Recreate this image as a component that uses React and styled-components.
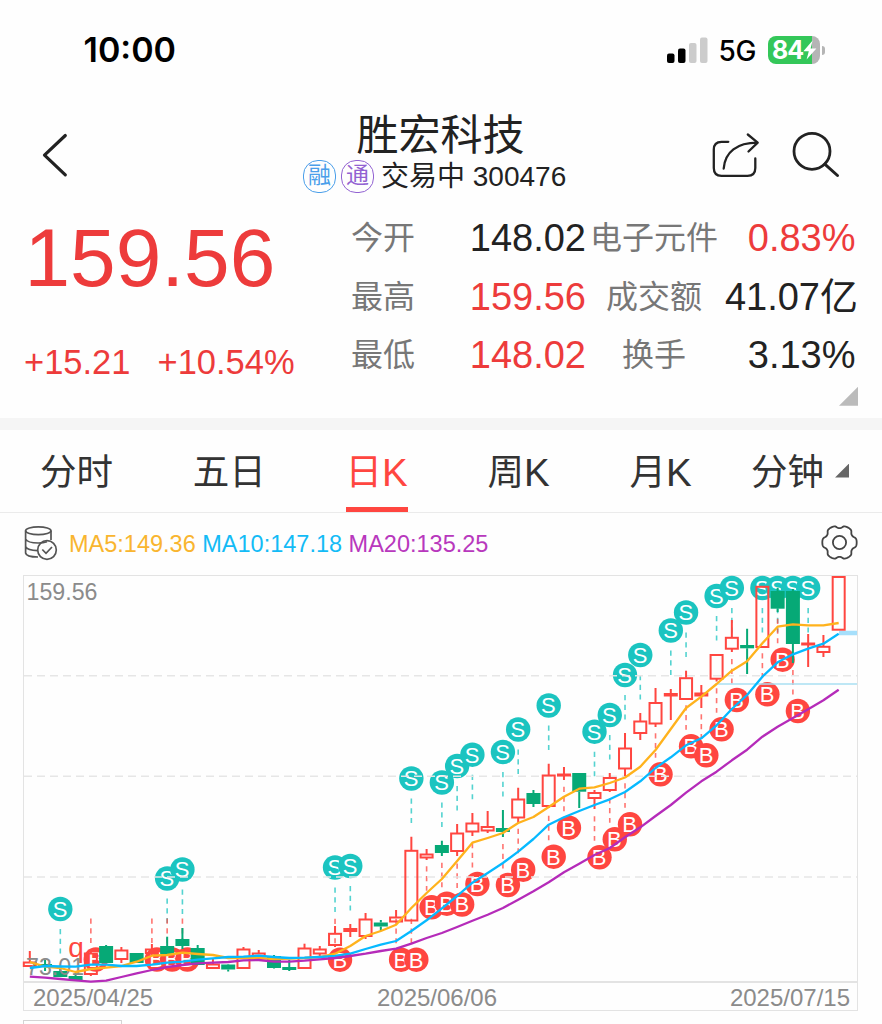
import React from 'react';
import styled, { createGlobalStyle } from 'styled-components';

const sans = '"Liberation Sans", "Noto Sans CJK SC", sans-serif';
const RED = '#ed3b3b';
const UP = '#ff4640';
const DOWN = '#06a976';
const TEAL = '#1bc4c0';

const GlobalStyle = createGlobalStyle`
  * { box-sizing: border-box; }
  body { margin: 0; background: #fefefe; font-family: ${sans}; color: #222; overflow: hidden; }
  svg { display: block; flex: none; }
`;

const Screen = styled.main`
  width: 882px;
  height: 1024px;
  overflow: hidden;
  background: #fefefe;
  display: flex;
  flex-direction: column;
`;

const StatusBar = styled.header`
  height: 100px;
  flex: none;
  display: flex;
  align-items: center;
  padding: 0 57px 0 83.5px;
  font-family: Inter, sans-serif;
  color: #000;
`;

const Clock = styled.time`
  font-size: 34px;
  font-weight: 600;
  line-height: 100px;
  margin-right: auto;
`;

const Network = styled.span`
  font-size: 28px;
  font-weight: 500;
  margin: 2px 12px 0 11px;
  letter-spacing: -0.4px;
`;

const Battery = styled.div`
  width: 52px;
  height: 28px;
  border-radius: 8px;
  background: linear-gradient(to right, #34c759 44px, #b5b5b5 44px);
  color: #fff;
  font-size: 25px;
  font-weight: 700;
  line-height: 28px;
  padding-left: 4px;
  display: flex;
  align-items: center;
  letter-spacing: -0.9px;
`;

const BatteryTip = styled.i`
  width: 3px;
  height: 9px;
  margin-left: 2px;
  border-radius: 0 4px 4px 0;
  background: #b5b5b5;
`;

const TitleBar = styled.div`
  height: 110px;
  flex: none;
  display: flex;
  align-items: center;
  padding: 0 42px 0 40px;
`;

const TitleBlock = styled.div`
  flex: 1;
  height: 110px;
  padding: 11px 0 0 233px;
`;

const StockName = styled.h1`
  margin: 0 0 0 53.5px;
  height: 48px;
  font-size: 42px;
  line-height: 49px;
  font-weight: 400;
  white-space: nowrap;
`;

const StockMeta = styled.div`
  display: flex;
  align-items: center;
  height: 34px;
  font-size: 28px;
  line-height: 34px;
  white-space: nowrap;
`;

const Tag = styled.span`
  width: 33px;
  height: 33px;
  flex: none;
  border: 1.5px solid ${(p) => p.$color};
  color: ${(p) => p.$color};
  border-radius: 15px;
  font-size: 23px;
  line-height: 29px;
  text-align: center;
  margin-right: ${(p) => p.$gap}px;
`;

const MetaText = styled.span`
  padding-top: 2px;
`;

const Quote = styled.section`
  height: 208px;
  flex: none;
  display: grid;
  grid-template-columns: 327px 88px 147px 136px 136px;
  grid-template-rows: 58.6px 58.6px 58.6px 25px;
  padding-left: 24px;
`;

const PriceBlock = styled.div`
  grid-row: 1 / 4;
  white-space: nowrap;
  color: ${RED};
`;

const Price = styled.div`
  height: 120px;
  padding: 7px 0 0 0.5px;
  font-size: 82px;
  line-height: 82px;
`;

const Changes = styled.div`
  display: flex;
  gap: 27px;
  font-size: 34.5px;
  line-height: 40px;
  padding-top: 12px;
`;

const Label = styled.span`
  color: #777;
  font-size: 32px;
  line-height: 56px;
  text-align: ${(p) => (p.$center ? 'center' : 'left')};
  white-space: nowrap;
`;

const Value = styled.span`
  color: ${(p) => (p.$up ? RED : '#222')};
  font-size: 38px;
  line-height: 56px;
  text-align: right;
  white-space: nowrap;
  padding-right: ${(p) => (p.$percent ? 2.5 : 0)}px;
`;

const ExpandCorner = styled.i`
  grid-column: 5;
  grid-row: 4;
  justify-self: end;
  width: 19px;
  height: 19px;
  margin-top: 1px;
  background: #bbb;
  clip-path: polygon(100% 0, 100% 100%, 0 100%);
`;

const Divider = styled.div`
  height: 12px;
  flex: none;
  background: #f5f5f5;
`;

const Tabs = styled.nav`
  height: 83px;
  flex: none;
  display: flex;
  gap: 79.8px;
  padding-left: 40px;
  border-bottom: 1.5px solid #ebebeb;
`;

const Tab = styled.span`
  height: 82px;
  padding-top: 8px;
  font-size: 36.5px;
  line-height: 84px;
  white-space: nowrap;
  color: ${(p) => (p.$active ? UP : '#333')};
  border-bottom: 5px solid ${(p) => (p.$active ? UP : 'transparent')};
  margin-left: ${(p) => (p.$last ? -20.5 : 0)}px;
  display: flex;
  align-items: center;
`;

const TabLatin = styled.span`
  font-size: 38.5px;
`;

const TabCorner = styled.i`
  width: 14px;
  height: 14px;
  margin: 0 0 4px 11px;
  background: #666;
  clip-path: polygon(100% 0, 100% 100%, 0 100%);
`;

const Legend = styled.div`
  height: 61px;
  flex: none;
  display: flex;
  align-items: center;
  padding: 0 24px 0 23px;
  font-size: 23.5px;
  line-height: 61px;

  > svg { margin-bottom: 2px; }
`;

const MaValues = styled.div`
  flex: 1;
  padding: 2px 0 0 11px;
  white-space: pre;
`;

const Ma = styled.span`
  color: ${(p) => p.$color};
`;

const ChartPanel = styled.section`
  width: 835px;
  height: 436px;
  flex: none;
  margin: 1px 0 0 23px;
  border: 1.5px solid #e3e3e3;
`;

const Plot = styled.svg`
  width: 835px;
  height: 407px;
  margin: -1.5px;
  overflow: visible;
  font-family: ${sans};
`;

const DateRow = styled.div`
  height: 28px;
  margin-top: 1px;
  border-top: 2px solid #e3e3e3;
  display: flex;
  justify-content: space-between;
  padding: 0 7px 0 9px;
  font-size: 24px;
  line-height: 29px;
  color: #8b8b8b;
`;

const MiddleDate = styled.span`
  margin-right: 9px;
`;

const NextPanel = styled.div`
  width: 99px;
  height: 20px;
  flex: none;
  margin: 9px 0 0 23px;
  border: 1.5px solid #d4d4d4;
`;

const stepX = 15.262;
const xAt = (i) => 29.8 + stepX * i;

// kind, high, body top, body bottom, low
const candles = [
  ['r', 951, 962, 966, 967], ['g', 960, 964, 967, 971], ['g', 969, 971, 977, 977],
  ['g', 973, 976, 980, 980], ['r', 951, 953, 974, 976], ['g', 945, 946, 963, 963],
  ['r', 947, 950, 959, 963], ['g', 953, 953, 963, 963], ['r', 944, 949, 953, 956],
  ['g', 936.7, 946, 954, 954], ['g', 928, 939, 946, 949], ['g', 945, 948, 965, 965],
  ['r', 959, 964, 968, 968], ['g', 964, 964.5, 969.5, 971.5], ['r', 947, 949, 968, 968],
  ['r', 950, 953, 956, 958], ['g', 955, 956, 968, 968.5], ['g', 960, 967, 970, 971],
  ['r', 943.7, 948, 968, 968], ['r', 946, 949, 953.5, 956], ['r', 926, 933.3, 945, 947],
  ['r', 924, 928.5, 931, 937], ['r', 913, 919, 936, 939], ['g', 920, 922.5, 926.5, 931],
  ['r', 910, 917, 921.5, 922], ['r', 836.7, 850.3, 920.5, 921], ['r', 849, 854, 857.5, 860],
  ['g', 840.7, 845, 853, 856], ['r', 824, 833, 851, 856], ['r', 813, 823, 831.5, 836],
  ['r', 811, 826.5, 830.5, 833], ['g', 810, 828, 832, 837], ['r', 787.7, 799, 817.5, 823],
  ['g', 790, 793, 804, 807], ['r', 763.7, 775, 806, 808], ['r', 767, 774, 775.5, 780],
  ['g', 773, 773, 791.7, 808], ['r', 790, 792.5, 798, 809], ['r', 773, 777.5, 790, 792],
  ['r', 733, 748, 768.5, 776], ['r', 713, 721, 733, 740], ['r', 688, 702.5, 723.5, 727],
  ['r', 689, 693.5, 695.5, 720], ['r', 670.7, 677.7, 699, 699], ['r', 685, 693, 695.5, 708],
  ['r', 654, 654.5, 678.7, 681.5], ['r', 620, 637.3, 648.7, 652], ['g', 628.7, 645, 648.3, 674],
  ['r', 586, 586.3, 647, 647], ['g', 587.7, 591, 608.7, 612], ['g', 589, 591, 644, 663],
  ['r', 634, 643, 644.5, 667], ['r', 635, 646.3, 652, 657], ['r', 576, 576.5, 629.7, 630],
];

const sells = [
  [2, 909], [9, 878.5], [10, 869.5], [20, 867.5], [21, 866], [25, 778.5], [27, 782.5],
  [28, 766], [29, 754.7], [31, 752], [32, 729.5], [34, 705.5], [37, 731.7], [38, 715],
  [39, 675], [40, 655], [42, 630.5], [43, 612.5], [45, 596], [46, 588], [48, 588],
  [49, 588], [50, 588], [51, 588],
];

const buys = [
  [4, 959.5], [8, 959.5], [9, 959.5], [10, 959.5], [20, 959.7], [24, 959.7], [25, 959.7],
  [26, 907.3], [27, 903.7], [28, 904.5], [29, 884], [31, 885], [32, 869.7], [34, 856.7],
  [35, 827.7], [37, 857.3], [38, 839.3], [39, 824.3], [41, 774.3], [43, 746.3], [44, 755.3],
  [45, 729.3], [46, 700], [48, 694.3], [49, 659.7], [50, 711],
];

const averages = [
  ['#ffb21c', [962, 966.7, 968, 972, 969, 967.7, 966, 961.7, 955.7, 955, 952.7, 954, 955, 958, 958, 958, 959, 958.5, 958, 957, 953.7, 946, 936, 931, 924.7, 908, 893, 879, 861, 842.7, 838, 833, 823, 817, 807, 796.7, 788.7, 787.3, 783, 777.5, 766.7, 750, 729, 708, 696.7, 684, 670.7, 661.3, 643.3, 626.7, 624.3, 625.3, 625.3, 623]],
  ['#06b9ff', [968, 966, 966.5, 966.7, 964.7, 964.7, 966, 966, 964.7, 962.7, 961.7, 959.7, 958.3, 957, 956.7, 955.7, 957, 958, 957.7, 957, 956, 953.7, 949, 944.7, 941, 931, 920.3, 908.3, 896, 882.7, 873, 863, 851.7, 839, 824.7, 817.3, 811, 805, 799.3, 792, 781.3, 768, 757.3, 745.3, 738.3, 725.3, 709, 695, 676.7, 662.3, 654.3, 648.7, 643.7, 633.7]],
  ['#b52bb9', [976.7, 977.7, 979, 980.3, 981.7, 980.7, 977, 973.3, 970, 967, 965, 963.3, 962.7, 962, 960.3, 960, 961.7, 961.7, 960.7, 959.3, 958, 956, 953.7, 951, 948.7, 943.7, 938, 933, 927, 920.7, 914.7, 908, 899.7, 891.3, 882.3, 872.3, 863.7, 855, 848, 837.3, 827.3, 816, 805, 792.7, 781.3, 771.7, 760.3, 749.7, 736.7, 726.7, 718, 709.3, 700.3, 689.7]],
];

function Marker({ x, y, letter, color }) {
  return (
    <g>
      <circle cx={x} cy={y} r="12.2" fill={color} />
      <text x={x - 0.3} y={y + 7.8} fontSize="22" fill="#fff" textAnchor="middle">{letter}</text>
    </g>
  );
}

function Candle({ x, data }) {
  const [kind, high, top, bottom, low] = data;
  const up = kind === 'r';
  const color = up ? UP : DOWN;
  return (
    <g stroke={color} strokeWidth="2" fill={up ? 'none' : color}>
      <path d={`M${x} ${high}V${top}M${x} ${bottom}V${low}`} />
      {up ? (
        <rect x={x - 6} y={top + 0.5} width="12" height={Math.max(bottom - top - 0.5, 1)} />
      ) : (
        <rect x={x - 7} y={top} width="14" height={bottom - top} stroke="none" />
      )}
    </g>
  );
}

function KLineChart() {
  return (
    <Plot viewBox="23 575 835 407">
      {sells.map(([i, y]) => (
        <path key={`sd${i}`} d={`M${xAt(i)} ${y + 20}v24.5`} stroke={TEAL} strokeOpacity="0.75" strokeWidth="1.6" strokeDasharray="5.2 4.6" />
      ))}
      {buys.map(([i, y]) => (
        <path key={`bd${i}`} d={`M${xAt(i)} ${y - 41}v24.5`} stroke={UP} strokeOpacity="0.75" strokeWidth="1.6" strokeDasharray="5.2 4.6" />
      ))}
      {sells.map(([i, y]) => <Marker key={`s${i}`} x={xAt(i)} y={y} letter="S" color={TEAL} />)}
      {buys.map(([i, y]) => <Marker key={`b${i}`} x={xAt(i) + 5} y={y} letter="B" color={UP} />)}
      <text x="68.3" y="957" fontSize="28" fill={UP}>q</text>
      <g stroke="#e6e6e6" strokeWidth="1.5" strokeDasharray="8 5">
        <path d="M24 675.8H857M24 776.3H857M24 877H857" />
      </g>
      <path d="M716 684H857" stroke="#a9dff2" strokeWidth="1.6" />
      <path d="M839 633H857" stroke="#a6dffb" strokeWidth="4.5" />
      {candles.map((c, i) => <Candle key={i} x={xAt(i)} data={c} />)}
      <g fill="#8b8b8b" fontSize="23.2">
        <text x="26.5" y="600.3">159.56</text>
        <text x="26" y="974.5">73.01</text>
      </g>
      {averages.map(([color, ys]) => (
        <polyline key={color} fill="none" stroke={color} strokeWidth="2.3" strokeLinejoin="round" points={ys.map((y, i) => `${xAt(i)},${y}`).join(' ')} />
      ))}
    </Plot>
  );
}

const gearPath = Array.from({ length: 120 }, (_, i) => {
  const a = (i / 120) * Math.PI * 2;
  const r = 15.6 + 1.6 * Math.tanh(1.8 * Math.cos(6 * a) + 0.8);
  return `${i ? 'L' : 'M'}${(18.5 + r * Math.cos(a)).toFixed(2)} ${(18.5 + r * Math.sin(a)).toFixed(2)}`;
}).join('') + 'Z';

export default function App() {
  return (
    <>
      <GlobalStyle />
      <Screen>
        <StatusBar>
          <Clock>10:00</Clock>
          <svg width="41" height="27" viewBox="0 0 41 27">
            <rect x="0" y="16.5" width="7.5" height="9.5" rx="2" fill="#000" />
            <rect x="11" y="11.5" width="7.5" height="14.5" rx="2" fill="#000" />
            <rect x="22" y="6" width="7.5" height="20" rx="2" fill="#ccc" />
            <rect x="33" y="0.5" width="7.5" height="25.5" rx="2" fill="#ccc" />
          </svg>
          <Network>5G</Network>
          <Battery>
            84
            <svg width="14" height="20" viewBox="0 0 14 20">
              <path d="M9.6 0.6L0.4 11.2h5.4L3.6 19.4 13.4 8.4H7.6z" fill="#fff" />
            </svg>
          </Battery>
          <BatteryTip />
        </StatusBar>

        <TitleBar>
          <svg width="30" height="48" viewBox="0 0 30 48" fill="none" stroke="#222" strokeWidth="3.2" strokeLinecap="round" strokeLinejoin="round">
            <path d="M25.3 4.5L4.5 24.2L25.3 43.8" />
          </svg>
          <TitleBlock>
            <StockName>胜宏科技</StockName>
            <StockMeta>
              <Tag $color="#4a9fea" $gap={5}>融</Tag>
              <Tag $color="#9262d2" $gap={7}>通</Tag>
              <MetaText>交易中 300476</MetaText>
            </StockMeta>
          </TitleBlock>
          <svg width="130" height="48" viewBox="710 131 130 48" fill="none" stroke="#222" strokeLinecap="round" strokeLinejoin="round">
            <path strokeWidth="2.3" d="M728.3 141.8H721.5Q713.8 141.8 713.8 149.5V168Q713.8 175.8 721.5 175.8H747.5Q755.3 175.8 755.3 168V158.5M723.7 168.5C725 152 737 142.7 757.5 142.7M747.8 134.5L757.7 142.7L748.5 151.5" />
            <circle cx="812" cy="151.3" r="18" strokeWidth="2.8" />
            <path strokeWidth="3" d="M824.8 164.2L837.5 175.5" />
          </svg>
        </TitleBar>

        <Quote>
          <PriceBlock>
            <Price>159.56</Price>
            <Changes><span>+15.21</span><span>+10.54%</span></Changes>
          </PriceBlock>
          <Label>今开</Label>
          <Value>148.02</Value>
          <Label $center>电子元件</Label>
          <Value $up $percent>0.83%</Value>
          <Label>最高</Label>
          <Value $up>159.56</Value>
          <Label $center>成交额</Label>
          <Value>41.07亿</Value>
          <Label>最低</Label>
          <Value $up>148.02</Value>
          <Label $center>换手</Label>
          <Value $percent>3.13%</Value>
          <ExpandCorner />
        </Quote>
        <Divider />

        <Tabs>
          <Tab>分时</Tab>
          <Tab>五日</Tab>
          <Tab $active>日<TabLatin>K</TabLatin></Tab>
          <Tab>周<TabLatin>K</TabLatin></Tab>
          <Tab>月<TabLatin>K</TabLatin></Tab>
          <Tab $last>分钟<TabCorner /></Tab>
        </Tabs>

        <Legend>
          <svg width="35" height="36" viewBox="23 525 35 36" fill="none" stroke="#555" strokeWidth="1.7">
            <ellipse cx="38.3" cy="530.7" rx="12.7" ry="3.9" />
            <path d="M25.6 530.7V553C26 555.5 31 557 38 557M51 530.7V540M25.6 539C27 542 33 543 38.3 543C42 543 45 542.4 47 541.7M25.6 546.7C27 549.5 32 550.6 37.5 550.6" />
            <circle cx="47" cy="550" r="9.3" />
            <path d="M42.3 549.5L46 553.3L52 547" />
          </svg>
          <MaValues>
            <Ma $color="#f9b52f">MA5:149.36</Ma> <Ma $color="#13bbf6">MA10:147.18</Ma> <Ma $color="#b838bd">MA20:135.25</Ma>
          </MaValues>
          <svg width="37" height="37" viewBox="0 0 37 37" fill="none" stroke="#444" strokeWidth="1.8" strokeLinejoin="round">
            <path d={gearPath} />
            <circle cx="18.5" cy="18.5" r="6.6" />
          </svg>
        </Legend>

        <ChartPanel>
          <KLineChart />
          <DateRow>
            <span>2025/04/25</span>
            <MiddleDate>2025/06/06</MiddleDate>
            <span>2025/07/15</span>
          </DateRow>
        </ChartPanel>
        <NextPanel />
      </Screen>
    </>
  );
}
